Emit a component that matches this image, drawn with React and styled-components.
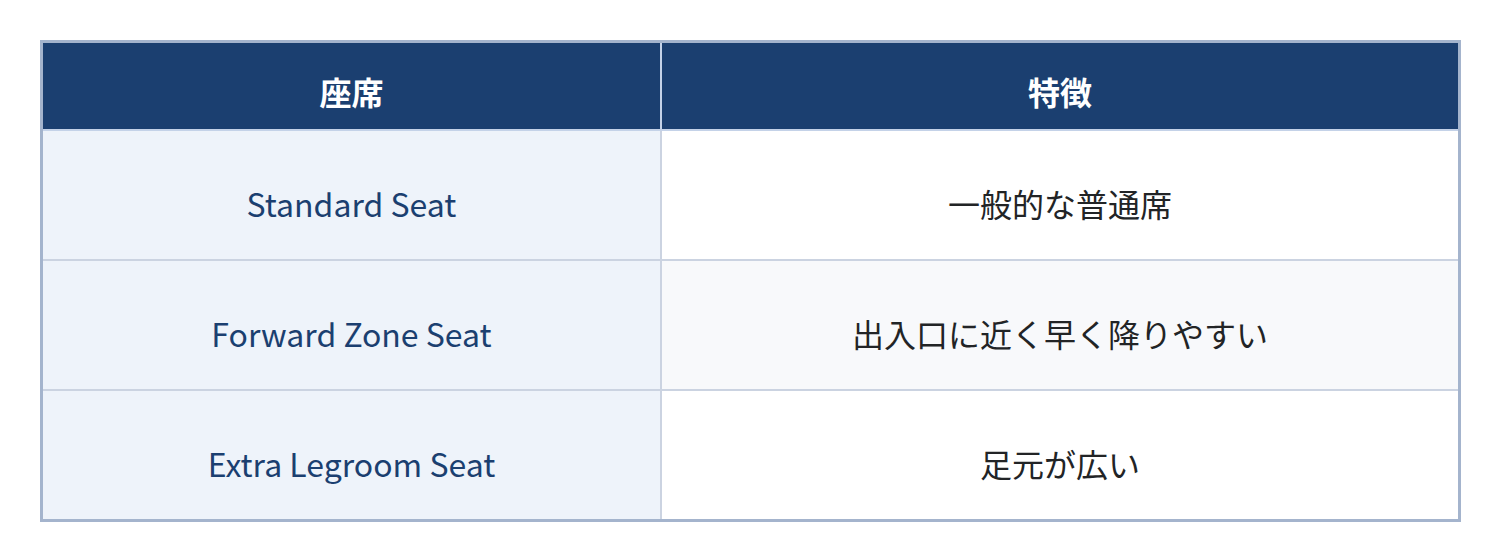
import React from "react";
import styled, { createGlobalStyle } from "styled-components";

const GlobalStyle = createGlobalStyle`
  html, body {
    margin: 0;
    padding: 0;
    background: #ffffff;
  }
  body {
    font-family: "Noto Sans CJK JP", "Noto Sans", sans-serif;
  }
`;

const Page = styled.div`
  padding: 40px 39px 40px 40px;
`;

const Table = styled.table`
  width: 100%;
  border-collapse: collapse;
  table-layout: fixed;
  border: 3px solid #a4b4cd;
`;

const HeadCell = styled.th`
  height: 77px;
  padding: 9px 0 0;
  background: #1b3f70;
  color: #ffffff;
  font-size: 32px;
  font-weight: 700;
  text-align: center;
  border: 2px solid #c4d2e8;
  border-top: none;
  width: ${(p) => p.$width || "auto"};
`;

const Cell = styled.td`
  height: 113px;
  padding: 15px 0 0;
  text-align: center;
  font-size: 32px;
  border: 2px solid #cbd3e1;
  background: ${(p) => (p.$name ? "#eef3fa" : p.$alt ? "#f8f9fb" : "#ffffff")};
  color: ${(p) => (p.$name ? "#1b3f70" : "#222426")};
`;

const rows = [
  { seat: "Standard Seat", feature: "一般的な普通席" },
  { seat: "Forward Zone Seat", feature: "出入口に近く早く降りやすい" },
  { seat: "Extra Legroom Seat", feature: "足元が広い" },
];

export default function App() {
  return (
    <Page>
      <GlobalStyle />
      <Table>
        <thead>
          <tr>
            <HeadCell $width="617px">座席</HeadCell>
            <HeadCell>特徴</HeadCell>
          </tr>
        </thead>
        <tbody>
          {rows.map((r, i) => (
            <tr key={r.seat}>
              <Cell $name>{r.seat}</Cell>
              <Cell $alt={i % 2 === 1}>{r.feature}</Cell>
            </tr>
          ))}
        </tbody>
      </Table>
    </Page>
  );
}
